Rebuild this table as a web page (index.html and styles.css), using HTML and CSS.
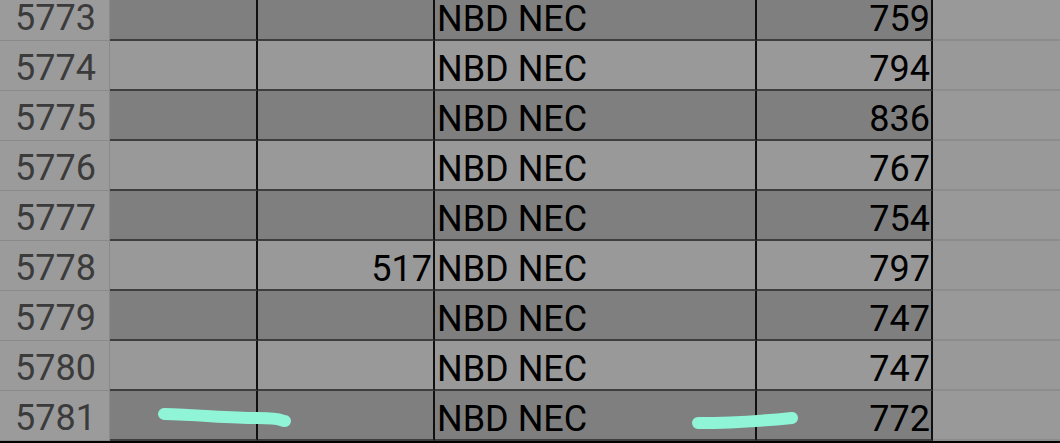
FILE: index.html
```html
<!DOCTYPE html>
<html lang="en">
<head>
    <meta charset="UTF-8">
    <meta name="viewport" content="width=device-width, initial-scale=1.0">
    <title>Sheet</title>
    <link rel="stylesheet" href="styles.css">
</head>
<body>
    <div class="wrap">
        <div class="sheet">
            <div class="rh">5773</div><div class="c a dark"></div><div class="c b dark"></div><div class="c t dark">NBD NEC</div><div class="c n dark">759</div><div class="e"></div>
            <div class="rh">5774</div><div class="c a"></div><div class="c b"></div><div class="c t">NBD NEC</div><div class="c n">794</div><div class="e"></div>
            <div class="rh">5775</div><div class="c a dark"></div><div class="c b dark"></div><div class="c t dark">NBD NEC</div><div class="c n dark">836</div><div class="e"></div>
            <div class="rh">5776</div><div class="c a"></div><div class="c b"></div><div class="c t">NBD NEC</div><div class="c n">767</div><div class="e"></div>
            <div class="rh">5777</div><div class="c a dark"></div><div class="c b dark"></div><div class="c t dark">NBD NEC</div><div class="c n dark">754</div><div class="e"></div>
            <div class="rh">5778</div><div class="c a"></div><div class="c b n">517</div><div class="c t">NBD NEC</div><div class="c n">797</div><div class="e"></div>
            <div class="rh">5779</div><div class="c a dark"></div><div class="c b dark"></div><div class="c t dark">NBD NEC</div><div class="c n dark">747</div><div class="e"></div>
            <div class="rh">5780</div><div class="c a"></div><div class="c b"></div><div class="c t">NBD NEC</div><div class="c n">747</div><div class="e"></div>
            <div class="rh">5781</div><div class="c a dark"></div><div class="c b dark"></div><div class="c t dark">NBD NEC</div><div class="c n dark">772</div><div class="e"></div>
        </div>
        <!-- marker strokes drawn over the sheet -->
        <svg class="marks" width="1060" height="443" viewBox="0 0 1060 443">
            <path d="M164 414 C 200 415, 232 418, 258 418 S 280 421 285 421" />
            <path d="M698 423 C 730 423, 762 421, 792 418" />
        </svg>
    </div>
</body>
</html>
```

FILE: styles.css
```css
html, body {
    margin: 0;
    background: #000000;
}
.wrap {
    position: relative;
    width: 1060px;
    height: 443px;
    overflow: hidden;
}
.sheet {
    display: grid;
    grid-template-columns: 110px 148px 177px 322px 176px 1fr;
    grid-auto-rows: 50px;
    margin-top: -9px;
    font-family: Roboto, "Liberation Sans", sans-serif;
    font-size: 36px;
}
.rh {
    background: #9b9b9b;
    color: #3b3b3b;
    border-right: 1px solid #8a8a8a;
    border-bottom: 1px solid #8a8a8a;
    padding: 6px 0 0 15px;
    line-height: 42px;
    box-sizing: border-box;
}
.c {
    background: #999999;
    color: #000000;
    border-bottom: 2px solid #3e3e3e;
    border-right: 2px solid #101010;
    padding-top: 8px;
    line-height: 40px;
    box-sizing: border-box;
    white-space: nowrap;
}
.c.dark {
    background: #7f7f7f;
}
.c.t {
    padding-left: 2px;
}
.c.n {
    text-align: right;
    padding-right: 1px;
}
.c.b.n {
    padding-right: 1px;
}
.e {
    background: #999999;
    border-bottom: 2px solid #8c8c8c;
}
.marks {
    position: absolute;
    left: 0;
    top: 0;
}
.marks path {
    fill: none;
    stroke: #8ff5d6;
    stroke-width: 12;
    stroke-linecap: round;
}
```
